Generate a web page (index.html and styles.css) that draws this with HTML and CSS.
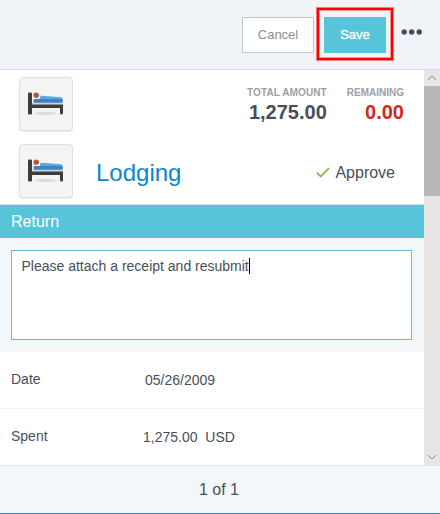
FILE: index.html
```
<!DOCTYPE html>
<html lang="en">
<head>
<meta charset="utf-8">
<title>Lodging expense</title>
<link rel="stylesheet" href="styles.css">
</head>
<body>
<svg class="defs" width="0" height="0" aria-hidden="true">
  <defs>
    <radialGradient id="shade"><stop offset="0.4" stop-color="#d6d6d6"/><stop offset="1" stop-color="#f4f4f4"/></radialGradient>
    <symbol id="bed" viewBox="0 0 35 24">
      <ellipse cx="17.5" cy="21.500" rx="14" ry="2" fill="url(#shade)"/>
      <path d="M4 10.5h31v2H4z" fill="#c9d3d6"/>
      <rect x="0" y="0.5" width="4" height="22" rx="1.2" fill="#3c3c3b"/>
      <path d="M3 12.5h32V21a1.5 1.5 0 0 1-3 0v-5H3z" fill="#3c3c3b"/>
      <path d="M11.5 7.5l.8-2.8q.3-1 1.5-1L33 5.3q1.800.2 1.800 2.200z" fill="#57a9e0"/>
      <rect x="5.500" y="7" width="29.300" height="3.800" rx="1.300" fill="#3f80c9"/>
      <circle cx="8.200" cy="3.200" r="2.700" fill="#b0563c"/>
    </symbol>
  </defs>
</svg>
<div class="app">
  <header class="toolbar">
    <button class="btn cancel">Cancel</button>
    <div class="highlight"><button class="btn save">Save</button></div>
    <svg class="more" width="22" height="6" viewBox="0 0 22 6"><g fill="#475059"><circle cx="3.200" cy="3" r="2.700"/><circle cx="10.700" cy="3" r="2.700"/><circle cx="18.200" cy="3" r="2.700"/></g></svg>
  </header>
  <div class="body">
    <main class="content">
      <section class="summary">
        <div class="summary-row">
          <div class="tile"><svg width="35" height="24"><use href="#bed"/></svg></div>
          <div class="amounts">
            <div class="amount"><span class="label total">TOTAL AMOUNT</span><span class="value">1,275.00</span></div>
            <div class="amount remaining"><span class="label">REMAINING</span><span class="value">0.00</span></div>
          </div>
        </div>
        <div class="summary-row second">
          <div class="tile"><svg width="35" height="24"><use href="#bed"/></svg></div>
          <h1>Lodging</h1>
          <div class="approve"><svg width="14" height="11" viewBox="0 0 14 11"><path d="M.8 5.700l3.900 3.800L13 1" fill="none" stroke="#82b548" stroke-width="1.700"/></svg><span>Approve</span></div>
        </div>
      </section>
      <h2>Return</h2>
      <div class="comment"><div class="field">Please attach a receipt and resubmit<i class="caret"></i></div></div>
      <div class="row date"><span class="name">Date</span><span class="data">05/26/2009</span></div>
      <div class="row spent"><span class="name">Spent</span><span class="data">1,275.00&nbsp; USD</span></div>
    </main>
    <div class="scrollbar">
      <svg width="16" height="16" viewBox="0 0 16 16"><path d="M4 10l4-4 4 4" fill="none" stroke="#858585" stroke-width="1"/></svg>
      <div class="thumb"></div>
      <svg class="down" width="16" height="16" viewBox="0 0 16 16"><path d="M4 6l4 4 4-4" fill="none" stroke="#858585" stroke-width="1"/></svg>
    </div>
  </div>
  <footer>1 of 1</footer>
</div>
</body>
</html>
```
FILE: styles.css
```
* { box-sizing: border-box; }
body { margin: 0; font-family: "Liberation Sans", Arial, sans-serif; font-size: 14px; color: #475059; }
h1, h2 { margin: 0; font-weight: 400; }
svg { display: block; flex: none; }
.defs { position: absolute; }
.app { width: 440px; height: 514px; display: flex; flex-direction: column; background: #fff; overflow: hidden; }

.toolbar { height: 70px; flex: none; display: flex; align-items: flex-start; padding: 7px 0 0 242px; background: #f0f4f8; border-bottom: 1px solid #d3d9dd; }
.btn { height: 36px; padding: 0; font: 13px/34px "Liberation Sans", Arial, sans-serif; border: 0; }
.cancel { width: 72px; margin-top: 10px; background: #fff; border: 1px solid #bfc5c9; color: #8c8f91; line-height: 32px; }
.highlight { width: 78px; height: 54px; margin-left: 2px; padding: 7px 5px; border: 3px solid #ff0000; box-shadow: inset 0 0 0 1px rgba(255, 0, 0, 0.4); outline: 1px solid rgba(240, 244, 248, 0.5); outline-offset: -1px; }
.save { display: block; width: 62px; background: #58c4d9; color: #fff; -webkit-text-stroke: 0.3px #fff; }
.more { margin: 22px 0 0 7px; }

.body { height: 395px; flex: none; display: flex; }
.content { width: 424px; flex: none; }
.summary { height: 135px; padding: 7px 20px 0 19px; border-bottom: 1px solid #d5dadd; }
.summary-row { display: flex; height: 54px; }
.summary-row.second { margin-top: 13px; align-items: center; }
.tile { width: 54px; height: 54px; flex: none; padding: 14px 0 0 8px; background: #f4f4f4; border: 1px solid #dfdfdf; border-radius: 4px; box-shadow: 0 1px 1px #eee; }
.amounts { display: flex; gap: 20px; margin-left: auto; padding-top: 10px; }
.amount { display: flex; flex-direction: column; align-items: flex-end; font-weight: 700; }
.label { font-size: 10px; line-height: 12px; color: #9da0a2; }
.total { letter-spacing: 0.1px; }
.value { font-size: 20px; line-height: 24px; margin-top: 1px; }
.remaining .value { color: #cf2a20; }
h1 { font-size: 24px; line-height: 28px; margin: 4px 0 0 23px; color: #0a87cf; }
.approve { display: flex; align-items: center; gap: 5px; margin: 3px 9px 0 auto; font-size: 16px; line-height: 20px; }

h2 { height: 33px; padding-left: 11px; background: #58c4d9; color: #fff; font-size: 16px; line-height: 33px; }
.comment { height: 114px; padding: 12px 12px 12px 11px; background: #f3f7fa; }
.field { height: 90px; padding: 7px 9.5px; display: flex; background: #fff; border: 1px solid #5bc3d5; line-height: 17px; }
.caret { width: 1px; height: 16px; background: #000; }
.row { display: flex; padding-left: 11px; }
.date { height: 57px; padding-top: 19px; border-bottom: 1px solid #eff3f6; }
.spent { height: 56px; padding-top: 19px; }
.name { width: 134px; line-height: 16px; }
.spent .name { width: 132px; }
.data { line-height: 18px; }

.scrollbar { width: 16px; flex: none; display: flex; flex-direction: column; background: #e6e6e6; }
.thumb { height: 110px; background: #b8b8b8; }
.down { margin-top: auto; }
footer { height: 49px; flex: none; padding-right: 2px; background: #f3f7fa; border-top: 1px solid #dfe4e7; border-bottom: 1px solid #2b83c6; font-size: 16px; line-height: 47px; text-align: center; }
```
